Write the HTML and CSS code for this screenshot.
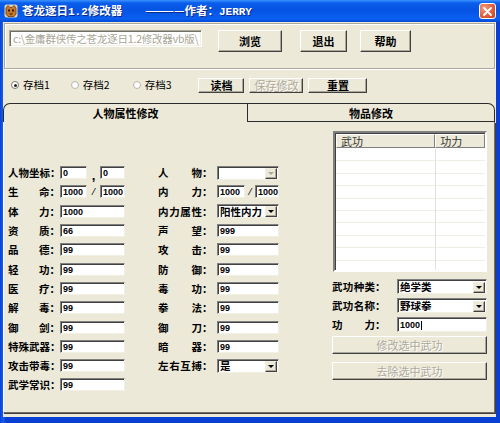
FILE: index.html
```html
<!DOCTYPE html>
<html>
<head>
<meta charset="utf-8">
<link rel="stylesheet" href="styles.css">
</head>
<body>
<div class="window">
  <div class="titlebar">
    <svg class="appicon" width="14" height="14" viewBox="0 0 14 14">
      <rect x="0.5" y="0.5" width="13" height="13" rx="2" fill="#D9D2B8"/>
      <path d="M2 4 L4 1.5 L6 3.5 L8 3.5 L10 1.5 L12 4 L12 10 L10 12.5 L4 12.5 L2 10 Z" fill="#C9782A" stroke="#6B3A10" stroke-width="0.8"/>
      <rect x="4" y="5.5" width="2" height="2" fill="#2A1A08"/>
      <rect x="8" y="5.5" width="2" height="2" fill="#2A1A08"/>
      <path d="M5 9.5 L9 9.5 L7 11 Z" fill="#2A1A08"/>
    </svg>
    <span class="title">苍龙逐日<span class="half">1.2</span>修改器　　————作者：<span class="half">JERRY</span></span>
    <div class="close">
      <svg width="9" height="9" viewBox="0 0 9 9"><path d="M1 1L8 8M8 1L1 8" stroke="#fff" stroke-width="1.8" stroke-linecap="round"/></svg>
    </div>
  </div>
  <div class="client">
    <div class="pathframe">
      <div class="path">c:\金庸群侠传之苍龙逐日1.2修改器vb版\</div>
      <button class="btn b-browse">浏览</button>
      <button class="btn b-exit">退出</button>
      <button class="btn b-help">帮助</button>
    </div>
    <div class="saverow">
      <span class="radio r1"><span class="dot on"></span>存档1</span>
      <span class="radio r2"><span class="dot"></span>存档2</span>
      <span class="radio r3"><span class="dot"></span>存档3</span>
      <button class="btn sm b-load">读档</button>
      <button class="btn sm b-save disabled">保存修改</button>
      <button class="btn sm b-reset">重置</button>
    </div>
    <div class="tabs">
      <div class="tab active">人物属性修改</div>
      <div class="tab">物品修改</div>
    </div>
    <div class="panel">
      <div class="col c1">
        <div class="row"><span class="lbl"><span class="j">人物坐标</span>：</span><span class="in w27">0</span><span class="sep comma">,</span><span class="in w25">0</span></div>
        <div class="row"><span class="lbl"><span class="j">生命</span>：</span><span class="in w27">1000</span><span class="sep slash">/</span><span class="in w25">1000</span></div>
        <div class="row"><span class="lbl"><span class="j">体力</span>：</span><span class="in w65">1000</span></div>
        <div class="row"><span class="lbl"><span class="j">资质</span>：</span><span class="in w65">66</span></div>
        <div class="row"><span class="lbl"><span class="j">品德</span>：</span><span class="in w65">99</span></div>
        <div class="row"><span class="lbl"><span class="j">轻功</span>：</span><span class="in w65">99</span></div>
        <div class="row"><span class="lbl"><span class="j">医疗</span>：</span><span class="in w65">99</span></div>
        <div class="row"><span class="lbl"><span class="j">解毒</span>：</span><span class="in w65">99</span></div>
        <div class="row"><span class="lbl"><span class="j">御剑</span>：</span><span class="in w65">99</span></div>
        <div class="row"><span class="lbl"><span class="j">特殊武器</span>：</span><span class="in w65">99</span></div>
        <div class="row"><span class="lbl"><span class="j">攻击带毒</span>：</span><span class="in w65">99</span></div>
        <div class="row"><span class="lbl"><span class="j">武学常识</span>：</span><span class="in w65">99</span></div>
      </div>
      <div class="col c2">
        <div class="row"><span class="lbl"><span class="j">人物</span>：</span><span class="combo w62 off"><span class="ctext"></span><span class="arrow"></span></span></div>
        <div class="row"><span class="lbl"><span class="j">内力</span>：</span><span class="in w28">1000</span><span class="sep slash s2">/</span><span class="in w24">1000</span></div>
        <div class="row"><span class="lbl"><span class="j">内力属性</span>：</span><span class="combo w62"><span class="ctext">阳性内力</span><span class="arrow"></span></span></div>
        <div class="row"><span class="lbl"><span class="j">声望</span>：</span><span class="in w62">999</span></div>
        <div class="row"><span class="lbl"><span class="j">攻击</span>：</span><span class="in w62">99</span></div>
        <div class="row"><span class="lbl"><span class="j">防御</span>：</span><span class="in w62">99</span></div>
        <div class="row"><span class="lbl"><span class="j">毒功</span>：</span><span class="in w62">99</span></div>
        <div class="row"><span class="lbl"><span class="j">拳法</span>：</span><span class="in w62">99</span></div>
        <div class="row"><span class="lbl"><span class="j">御刀</span>：</span><span class="in w62">99</span></div>
        <div class="row"><span class="lbl"><span class="j">暗器</span>：</span><span class="in w62">99</span></div>
        <div class="row"><span class="lbl"><span class="j">左右互搏</span>：</span><span class="combo w62"><span class="ctext">是</span><span class="arrow"></span></span></div>
      </div>
      <div class="col c3">
        <div class="list">
          <div class="lhead"><span class="hc h1">武功</span><span class="hc h2">功力</span></div>
          <div class="lbody"></div>
        </div>
        <div class="frow"><span class="lbl"><span class="j">武功种类</span>：</span><span class="combo w90"><span class="ctext">绝学类</span><span class="arrow"></span></span></div>
        <div class="frow"><span class="lbl"><span class="j">武功名称</span>：</span><span class="combo w90"><span class="ctext">野球拳</span><span class="arrow"></span></span></div>
        <div class="frow"><span class="lbl"><span class="j">功力</span>：</span><span class="in w90 tall">1000<span class="caret"></span></span></div>
        <button class="btn wide disabled">修改选中武功</button>
        <button class="btn wide disabled">去除选中武功</button>
      </div>
    </div>
  </div>
</div>
</body>
</html>
```

FILE: styles.css
```css
* { box-sizing: border-box; margin: 0; padding: 0; }
html, body { width: 500px; height: 423px; overflow: hidden; background: #0842D8; }
body { font-family: "Noto Sans CJK SC", "Noto Sans", sans-serif; font-size: 11px; color: #000; }

.window { width: 500px; height: 423px; display: flex; flex-direction: column; background: linear-gradient(90deg, #0A3FD4 0, #1560F0 3px, #0A3FD4 6px); }

.titlebar {
  height: 22px; flex: none; display: flex; align-items: center; padding: 0 4px;
  background: linear-gradient(#3A93FF 0, #0A5EEB 3px, #0553E4 45%, #0A60F0 85%, #0448D6 100%);
  color: #fff;
}
.appicon { flex: none; margin-right: 4px; }
.title { font-weight: 700; font-size: 11.5px; line-height: 22px; white-space: pre; text-shadow: 1px 1px 0 #0A2A8C; }
.half { font-family: "Liberation Mono", "DejaVu Sans Mono", monospace; font-size: 11px; font-weight: 700; }
.close {
  margin-left: auto; width: 17px; height: 16px; border: 1px solid #fff; border-radius: 3px;
  background: radial-gradient(circle at 30% 30%, #F29B7C, #E0603E 55%, #C4401F);
  display: flex; align-items: center; justify-content: center;
}

.client { flex: 1; margin: 0 4px 6px 3px; background: #ECE9D8; display: flex; flex-direction: column; }

.pathframe {
  margin: 1px 1px 0 1px; height: 46px; flex: none;
  border: 1px solid #ACA899; box-shadow: inset 1px 1px 0 #fff, 1px 1px 0 #fff;
  display: flex; align-items: flex-start; padding: 6px 0 0 4px;
}
.path {
  width: 193px; height: 17px; background: #fff; color: #A8A594; font-size: 10.5px; line-height: 13px;
  padding: 1px 0 0 3px; white-space: nowrap; overflow: hidden; letter-spacing: -0.2px;
  border: 1px solid; border-color: #ACA899 #fff #fff #ACA899; box-shadow: inset 1px 1px 0 #716F64, inset -1px -1px 0 #F1EFE2;
}

.btn {
  font-family: inherit; font-size: 11px; font-weight: 700; color: #000; background: #ECE9D8;
  border: 1px solid; border-color: #fff #404040 #404040 #fff;
  box-shadow: inset -1px -1px 0 #ACA899;
  display: flex; align-items: center; justify-content: center; line-height: 1;
}
.btn.disabled { color: #ACA899; font-weight: 400; text-shadow: 1px 1px 0 #fff; }
.b-browse { width: 64px; height: 22px; margin: 0 0 0 16px; }
.b-exit { width: 47px; height: 22px; margin: 0 0 0 18px; }
.b-help { width: 51px; height: 22px; margin: 0 0 0 13px; }

.saverow { height: 16px; margin-top: 8px; display: flex; align-items: center; flex: none; }
.radio { display: flex; align-items: center; font-size: 10.5px; line-height: 12px; }
.dot { width: 8px; height: 8px; border-radius: 50%; border: 1px solid #B8B5A6; background: #fff; margin-right: 4px; position: relative; }
.dot.on { border-color: #7D7A6C; }
.dot.on::after { content: ""; position: absolute; left: 1.5px; top: 1.5px; width: 3px; height: 3px; border-radius: 50%; background: #222; }
.r1 { margin-left: 8px; }
.r2 { margin-left: 21px; }
.r3 { margin-left: 23px; }
.btn.sm { height: 15px; }
.b-load { width: 46px; margin-left: 27px; }
.b-save { width: 54px; margin-left: 5px; }
.b-reset { width: 59px; margin-left: 5px; }

.tabs { display: flex; margin-top: 10px; height: 19px; flex: none; }
.tab {
  height: 19px; display: flex; align-items: center; justify-content: center; font-weight: 700; font-size: 11px;
  border: 1px solid #2C2C2C; border-bottom: none;
}
.tab.active { width: 245px; border-radius: 7px 0 0 0; border-right-color: #2C2C2C; background: #ECE9D8; }
.tab:not(.active) { width: 247px; border-radius: 0 7px 0 0; border-left: none; border-bottom: 1px solid #2C2C2C; }

.panel {
  flex: 1; margin: 0 1px 4px 0; display: flex; align-items: flex-start; padding-top: 9px;
  border-left: 1px solid #fff; border-right: 1px solid #716F64; border-bottom: 1px solid #716F64;
  box-shadow: 1px 1px 0 #404040;
}

.col { display: flex; flex-direction: column; }
.c1, .c2 { display: grid; grid-auto-rows: 19.3px; margin-top: 32px; }
.c1 { width: 117px; margin-left: 4px; }
.c2 { width: 121px; margin-left: 33px; }
.c3 { width: 155px; margin-left: 53px; }

.row { display: flex; align-items: center; }
.lbl { display: flex; font-weight: 700; font-size: 10.5px; line-height: 13px; white-space: nowrap; flex: none; }
.j { display: inline-block; text-align: justify; text-align-last: justify; }
.c1 .lbl { width: 52px; }
.c1 .j { width: 43px; }
.c2 .lbl { width: 59px; }
.c2 .j { width: 44px; }
.c3 .lbl { width: 65px; }
.c3 .j { width: 43px; }

.in {
  height: 13px; background: #fff; font-family: "Liberation Sans", Arial, sans-serif; font-weight: 700; font-size: 9px;
  line-height: 10px; padding: 1px 0 0 2px; white-space: nowrap;
  border: 1px solid; border-color: #808080 #F1EFE2 #F1EFE2 #808080; box-shadow: inset 1px 1px 0 #404040;
  display: flex; align-items: center;
}
.in.tall { height: 15px; }
.w25 { width: 25px; } .w27 { width: 27px; } .w24 { width: 24px; } .w28 { width: 28px; }
.w62 { width: 62px; } .w65 { width: 65px; } .w90 { width: 90px; }
.sep { width: 13px; flex: none; font-weight: 700; text-align: center; }
.comma { font-size: 13px; line-height: 13px; padding-top: 5px; font-family: "Liberation Sans", sans-serif; }
.slash { font-size: 11px; line-height: 13px; font-family: "Liberation Serif", serif; font-style: italic; }
.s2 { width: 10px; }
.caret { display: inline-block; width: 1px; height: 9px; background: #000; margin-left: 1px; }

.combo {
  height: 14px; background: #fff; display: flex; align-items: center; justify-content: space-between;
  border: 1px solid; border-color: #808080 #F1EFE2 #F1EFE2 #808080; box-shadow: inset 1px 1px 0 #404040;
  padding: 1px 1px 0 2px;
}
.c3 .combo { height: 15px; }
.ctext { font-weight: 700; font-size: 10.5px; line-height: 12px; white-space: nowrap; }
.arrow {
  width: 12px; height: 11px; background: #ECE9D8; flex: none; position: relative;
  border: 1px solid; border-color: #F1EFE2 #404040 #404040 #F1EFE2; box-shadow: inset -1px -1px 0 #ACA899;
}
.arrow::after {
  content: ""; position: absolute; left: 2px; top: 3px;
  border-left: 3px solid transparent; border-right: 3px solid transparent; border-top: 3px solid #000;
}
.combo.off .arrow::after { border-top-color: #ACA899; }

.list {
  width: 154px; height: 141px; margin-left: 1px; background: #fff; display: flex; flex-direction: column;
  border: 2px solid; border-color: #808080 #fff #fff #808080; box-shadow: inset 1px 1px 0 #404040;
}
.lhead { display: flex; height: 15px; flex: none; margin: 1px 0 0 1px; }
.hc {
  height: 14px; background: #ECE9D8; font-size: 11px; line-height: 12px; color: #333; padding-left: 4px;
  border: 1px solid; border-color: #fff #808080 #808080 #fff;
}
.h1 { width: 100px; }
.h2 { width: 50px; }
.lbody {
  flex: 1; margin-left: 1px;
  background:
    linear-gradient(90deg, transparent 99px, #E4E2D8 99px, #E4E2D8 100px, transparent 100px),
    repeating-linear-gradient(180deg, transparent 0, transparent 11.4px, #EEEDE6 11.4px, #EEEDE6 12.4px);
}

.frow { display: flex; align-items: center; height: 15px; margin-top: 4px; }
.list + .frow { margin-top: 7px; }
.btn.wide { width: 155px; height: 18px; margin-top: 4px; }
.btn.wide + .btn.wide { margin-top: 8px; }
```
